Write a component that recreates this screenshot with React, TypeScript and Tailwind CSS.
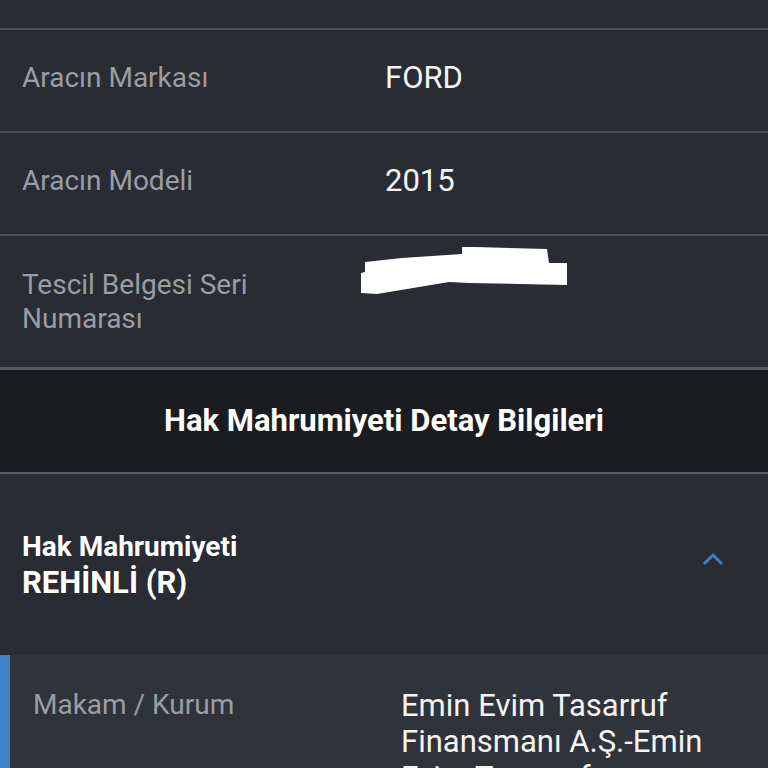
const rows = [
  { label: "Aracın Markası", value: "FORD", h: "h-[103px]" },
  { label: "Aracın Modeli", value: "2015", h: "h-[103px]" },
];

function Redacted() {
  // white marker scribble over the serial number
  return (
    <svg width="210" height="50" viewBox="357 262 210 50" className="-ml-[26px] -mt-[22px] block">
      <polygon
        fill="#ffffff"
        points="363,278 400,274 460,270 460,263 473,263 545,265 547,279 565,279 565,301 467,299 447,298 375,310 359,309 359,289 363,288"
      />
    </svg>
  );
}

export default function App() {
  return (
    <div className="w-[768px] h-[768px] overflow-hidden bg-[#292c33] font-['Roboto',sans-serif]">
      <div className="h-[30px] border-b-2 border-[#4b4e56]" />
      {rows.map((r) => (
        <div key={r.label} className={`flex ${r.h} border-b-2 border-[#4b4e56] pt-[31px]`}>
          <div className="w-[385px] pl-[22px] text-[28px] leading-[34px] text-[#9b9da3]">{r.label}</div>
          <div className="text-[31px] leading-[34px] text-[#f4f4f4]">{r.value}</div>
        </div>
      ))}
      <div className="flex h-[134px] border-b-[3px] border-[#55585f] pt-[32px]">
        <div className="w-[385px] pl-[22px] text-[28px] leading-[34px] text-[#9b9da3]">
          Tescil Belgesi Seri
          <br />
          Numarası
        </div>
        <div>
          <Redacted />
        </div>
      </div>
      <div className="flex h-[104px] items-center justify-center border-b-2 border-[#585c64] bg-[#1b1c1f]">
        <span className="text-[31px] font-bold text-white">Hak Mahrumiyeti Detay Bilgileri</span>
      </div>
      <div className="flex h-[181px] items-center justify-between pl-[22px] pr-[44px]">
        <div className="font-bold leading-[36px] text-white">
          <div className="text-[28px]">Hak Mahrumiyeti</div>
          <div className="text-[31px]">REHİNLİ (R)</div>
        </div>
        <svg width="22" height="14" viewBox="0 0 22 14" className="-mt-[12px]">
          <path d="M2 12 L11 3 L20 12" fill="none" stroke="#3f7fc4" strokeWidth="3" />
        </svg>
      </div>
      <div className="flex bg-[#30333a]">
        <div className="w-[10px] bg-[#3f82c8]" />
        <div className="flex flex-1 pt-[33px]">
          <div className="w-[391px] pl-[23px] text-[28px] leading-[34px] text-[#9b9da3]">Makam / Kurum</div>
          <div className="w-[335px] text-[31px] leading-[36px] text-[#f4f4f4]">
            Emin Evim Tasarruf Finansmanı A.Ş.-Emin Evim Tasarruf Finansmanı
          </div>
        </div>
      </div>
    </div>
  );
}
